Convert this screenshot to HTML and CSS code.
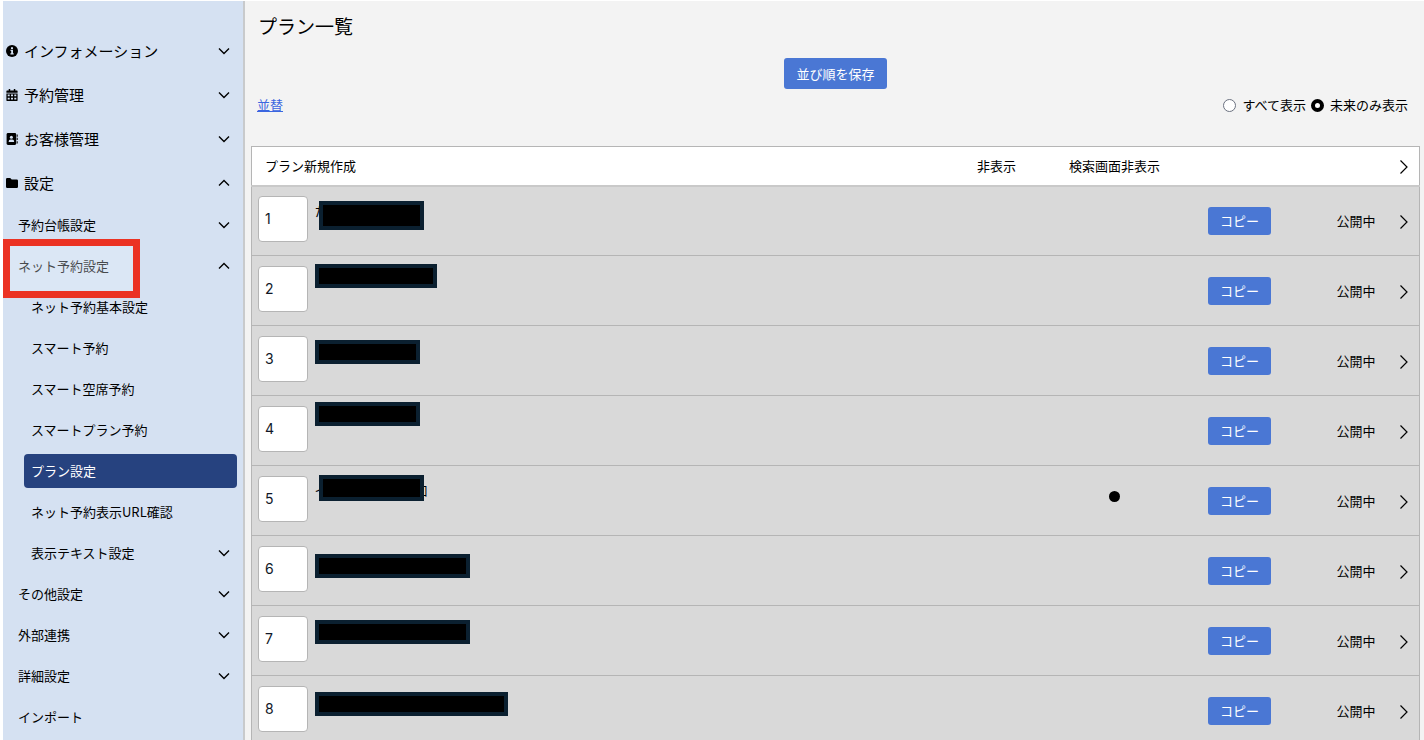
FILE: index.html
```
<!DOCTYPE html>
<html lang="ja">
<head>
    <meta charset="UTF-8">
    <meta name="viewport" content="width=device-width, initial-scale=1.0">
    <title>プラン一覧</title>
    <link rel="stylesheet" href="styles.css">
</head>
<body>
    <!-- shared icons -->
    <svg class="sprite" aria-hidden="true">
        <symbol id="down" viewBox="0 0 12 8"><path d="M1 1.5l5 5 5-5" fill="none" stroke="#000" stroke-width="1.4"/></symbol>
        <symbol id="up" viewBox="0 0 12 8"><path d="M1 6.5l5-5 5 5" fill="none" stroke="#000" stroke-width="1.4"/></symbol>
        <symbol id="next" viewBox="0 0 8 14"><path d="M.5 .5L7 7 .5 13.5" fill="none" stroke="#000" stroke-width="1.2"/></symbol>
    </svg>

    <div class="layout">
        <nav class="sidebar">
            <ul class="menu">
                <li><button class="item">
                    <svg class="icon" viewBox="0 0 12 12"><circle cx="6" cy="6" r="6"/><path d="M5 2.3h2v1.6H5zM4.5 4.8H7v3.4h.7v1.2H4.4V8.2h.8V6h-.7z" fill="#d5e1f2"/></svg>
                    インフォメーション<svg class="arrow"><use href="#down"/></svg></button></li>
                <li><button class="item">
                    <svg class="icon" viewBox="0 0 12 12"><path d="M2.7 0h1.5v1.5h3.6V0h1.5v1.5H11q.6 0 .6.7v1.6H.4V2.2q0-.7.6-.7h1.7z"/><path d="M.4 4.5h11.2v6.8q0 .7-.6.7H1q-.6 0-.6-.7z"/><path d="M1.7 5.5h2v1.8h-2zM5 5.5h2v1.8H5zM8.3 5.5h2v1.8h-2zM1.7 8.7h2v1.8h-2zM5 8.7h2v1.8H5zM8.3 8.7h2v1.8h-2z" fill="#d5e1f2"/></svg>
                    予約管理<svg class="arrow"><use href="#down"/></svg></button></li>
                <li><button class="item">
                    <svg class="icon" viewBox="0 0 12 12"><rect x=".6" width="9.6" height="12" rx="1.4"/><path d="M10.7 1.5h1v2.2h-1zM10.7 4.8h1V7h-1zM10.7 8.2h1v2.2h-1z"/><circle cx="5.4" cy="4.3" r="1.5" fill="#d5e1f2"/><path d="M2.6 9q0-2.4 2-2.4h1.6q2 0 2 2.4z" fill="#d5e1f2"/></svg>
                    お客様管理<svg class="arrow"><use href="#down"/></svg></button></li>
                <li><button class="item">
                    <svg class="icon" viewBox="0 0 12 12"><path d="M0 2.2Q0 1 1.2 1h3l1.5 1.5h5.1q1.2 0 1.2 1.2v6q0 1.3-1.2 1.3H1.2Q0 11 0 9.7z"/></svg>
                    設定<svg class="arrow"><use href="#up"/></svg></button>
                    <ul class="sub">
                        <li><button class="item">予約台帳設定<svg class="arrow"><use href="#down"/></svg></button></li>
                        <li class="marked"><button class="item">ネット予約設定<svg class="arrow"><use href="#up"/></svg></button>
                            <ul class="sub-inner">
                                <li><a class="item" href="#">ネット予約基本設定</a></li>
                                <li><a class="item" href="#">スマート予約</a></li>
                                <li><a class="item" href="#">スマート空席予約</a></li>
                                <li><a class="item" href="#">スマートプラン予約</a></li>
                                <li><a class="item active" href="#">プラン設定</a></li>
                                <li><a class="item" href="#">ネット予約表示URL確認</a></li>
                                <li><button class="item">表示テキスト設定<svg class="arrow"><use href="#down"/></svg></button></li>
                            </ul>
                        </li>
                        <li><button class="item">その他設定<svg class="arrow"><use href="#down"/></svg></button></li>
                        <li><button class="item">外部連携<svg class="arrow"><use href="#down"/></svg></button></li>
                        <li><button class="item">詳細設定<svg class="arrow"><use href="#down"/></svg></button></li>
                        <li><a class="item" href="#">インポート</a></li>
                    </ul>
                </li>
            </ul>
        </nav>

        <main class="main">
            <h1>プラン一覧</h1>
            <button class="btn save">並び順を保存</button>

            <div class="toolbar">
                <a href="#">並替</a>
                <div class="filter">
                    <input type="radio" name="range" id="all"><label for="all">すべて表示</label>
                    <input type="radio" name="range" id="future" checked><label for="future">未来のみ表示</label>
                </div>
            </div>

            <table class="plans">
                <colgroup>
                    <col class="col-order">
                    <col>
                    <col class="col-flag">
                    <col class="col-flag">
                    <col class="col-copy">
                    <col class="col-status">
                    <col class="col-go">
                </colgroup>
                <thead>
                    <tr>
                        <th class="title" colspan="2">プラン新規作成</th>
                        <th>非表示</th>
                        <th>検索画面非表示</th>
                        <th></th>
                        <th></th>
                        <th><svg class="next"><use href="#next"/></svg></th>
                    </tr>
                </thead>
                <tbody>
                    <tr>
                        <td class="order"><input type="text" value="1" aria-label="並び順"></td>
                        <td class="name"><span>た</span><i class="mask m1"></i></td>
                        <td></td><td></td>
                        <td><button class="btn">コピー</button></td>
                        <td class="status">公開中</td>
                        <td><svg class="next"><use href="#next"/></svg></td>
                    </tr>
                    <tr>
                        <td class="order"><input type="text" value="2" aria-label="並び順"></td>
                        <td class="name"><i class="mask m2"></i></td>
                        <td></td><td></td>
                        <td><button class="btn">コピー</button></td>
                        <td class="status">公開中</td>
                        <td><svg class="next"><use href="#next"/></svg></td>
                    </tr>
                    <tr>
                        <td class="order"><input type="text" value="3" aria-label="並び順"></td>
                        <td class="name"><i class="mask m3"></i></td>
                        <td></td><td></td>
                        <td><button class="btn">コピー</button></td>
                        <td class="status">公開中</td>
                        <td><svg class="next"><use href="#next"/></svg></td>
                    </tr>
                    <tr>
                        <td class="order"><input type="text" value="4" aria-label="並び順"></td>
                        <td class="name"><i class="mask m4"></i></td>
                        <td></td><td></td>
                        <td><button class="btn">コピー</button></td>
                        <td class="status">公開中</td>
                        <td><svg class="next"><use href="#next"/></svg></td>
                    </tr>
                    <tr>
                        <td class="order"><input type="text" value="5" aria-label="並び順"></td>
                        <td class="name"><div class="ends"><span>イ</span><span>加</span></div><i class="mask m5"></i></td>
                        <td></td>
                        <td><span class="dot"></span></td>
                        <td><button class="btn">コピー</button></td>
                        <td class="status">公開中</td>
                        <td><svg class="next"><use href="#next"/></svg></td>
                    </tr>
                    <tr>
                        <td class="order"><input type="text" value="6" aria-label="並び順"></td>
                        <td class="name"><i class="mask m6"></i></td>
                        <td></td><td></td>
                        <td><button class="btn">コピー</button></td>
                        <td class="status">公開中</td>
                        <td><svg class="next"><use href="#next"/></svg></td>
                    </tr>
                    <tr>
                        <td class="order"><input type="text" value="7" aria-label="並び順"></td>
                        <td class="name"><i class="mask m7"></i></td>
                        <td></td><td></td>
                        <td><button class="btn">コピー</button></td>
                        <td class="status">公開中</td>
                        <td><svg class="next"><use href="#next"/></svg></td>
                    </tr>
                    <tr>
                        <td class="order"><input type="text" value="8" aria-label="並び順"></td>
                        <td class="name"><i class="mask m8"></i></td>
                        <td></td><td></td>
                        <td><button class="btn">コピー</button></td>
                        <td class="status">公開中</td>
                        <td><svg class="next"><use href="#next"/></svg></td>
                    </tr>
                </tbody>
            </table>
        </main>
    </div>
</body>
</html>
```
FILE: styles.css
```
*, *::before, *::after {
    box-sizing: border-box;
}
body {
    margin: 0;
    background: #fff;
    color: #000;
    font-family: "Noto Sans CJK JP", sans-serif;
    font-size: 13px;
    line-height: 20px;
}
button, input {
    font-family: inherit;
    font-size: inherit;
    line-height: inherit;
    color: inherit;
}
ul {
    list-style: none;
    margin: 0;
    padding: 0;
}
.sprite {
    display: none;
}
.layout {
    display: flex;
    height: 100vh;
    overflow: hidden;
    padding: 1px 0 0 3px;
}

/* sidebar */
.sidebar {
    flex: none;
    width: 242px;
    padding-top: 28px;
    background: #d5e1f2;
    border-right: 2px solid #c8cacc;
}
.item {
    display: flex;
    align-items: center;
    width: 100%;
    height: 44px;
    padding: 0 13px 0 3px;
    border: 0;
    background: none;
    color: #000;
    font-size: 15px;
    text-align: left;
    text-decoration: none;
    cursor: pointer;
}
.icon {
    width: 12px;
    height: 12px;
    margin-right: 6px;
}
.arrow {
    width: 12px;
    height: 8px;
    margin-left: auto;
}
.sub {
    margin-top: -1px;
}
.sub .item {
    height: 41px;
    padding-left: 15px;
    font-size: 13px;
}
.sub-inner .item {
    padding-left: 28px;
}
.sub-inner .active {
    width: auto;
    height: 34px;
    margin: 4px 6px 3px 21px;
    padding-left: 7px;
    border-radius: 4px;
    background: #26427f;
    color: #fff;
}
.marked {
    position: relative;
}
.marked::after {
    content: "";
    position: absolute;
    top: -6px;
    left: 0;
    width: 137px;
    height: 59px;
    border: 7px solid #eb3223;
    background: rgba(236, 244, 252, 0.3);
    pointer-events: none;
}

/* main */
.main {
    flex: 1;
    padding: 10px 4px 0 6px;
    background: #f3f3f3;
}
h1 {
    margin: 0 0 17px 7px;
    font-size: 19px;
    font-weight: normal;
    line-height: 30px;
}
.btn {
    height: 28px;
    padding: 0 12px;
    border: 0;
    border-radius: 3px;
    background: #4a77d4;
    color: #fff;
    cursor: pointer;
}
.save {
    display: block;
    height: 31px;
    margin: 0 auto;
}
.toolbar {
    display: flex;
    justify-content: space-between;
    align-items: center;
    margin: 6px 0 31px;
    padding: 0 12px 0 6px;
}
.toolbar a {
    color: #3b66e0;
}
.filter {
    display: flex;
    align-items: center;
}
.filter input {
    appearance: none;
    width: 13px;
    height: 13px;
    margin: 0 6px 0 5px;
    border: 1px solid #6b7280;
    border-radius: 50%;
    background: #fff;
}
.filter input:checked {
    border: 4px solid #000;
}

/* plan list */
.plans {
    width: 100%;
    table-layout: fixed;
    border-collapse: collapse;
    border: 1px solid #b5b5b5;
}
.col-order {
    width: 57px;
}
.col-flag {
    width: 118px;
}
.col-copy {
    width: 132px;
}
.col-status {
    width: 84px;
}
.col-go {
    width: 30px;
}
.plans th, .plans td {
    padding: 0;
    font-weight: normal;
    text-align: center;
}
.plans th {
    height: 39px;
    background: #fff;
    border-bottom: 2px solid #c9c9c9;
}
.plans td {
    height: 70px;
    border-bottom: 1px solid #b5b5b5;
    background: #d9d9d9;
}
.plans .title {
    padding-left: 13px;
    text-align: left;
}
.plans .status {
    padding-right: 14px;
    text-align: right;
}
.next {
    display: block;
    width: 8px;
    height: 14px;
    margin: 3px auto 0;
}
.plans .order {
    padding: 0 0 4px 6px;
}
.order input {
    display: block;
    width: 50px;
    height: 46px;
    padding: 0 6px;
    border: 1px solid #b5b5b5;
    border-radius: 4px;
    background: #fff;
    color: #111827;
    font-family: Inter, sans-serif;
    font-size: 14px;
}
.dot {
    display: block;
    width: 11px;
    height: 11px;
    margin: 0 auto 8px;
    border-radius: 50%;
    background: #000;
}

/* names are covered */
.plans .name {
    position: relative;
    padding: 14px 0 0 6px;
    text-align: left;
    vertical-align: top;
}
.ends {
    display: flex;
    justify-content: space-between;
    width: 113px;
}
.mask {
    position: absolute;
    top: 14px;
    left: 6px;
    width: 105px;
    height: 24px;
    border: 4px solid #0b2030;
    background: #000;
}
.m1 { left: 10px; height: 29px; }
.m2 { top: 8px; width: 122px; }
.m4 { top: 6px; }
.m5 { top: 9px; left: 10px; height: 26px; }
.m6 { top: 18px; width: 155px; }
.m7 { width: 155px; }
.m8 { top: 16px; width: 193px; }
```
